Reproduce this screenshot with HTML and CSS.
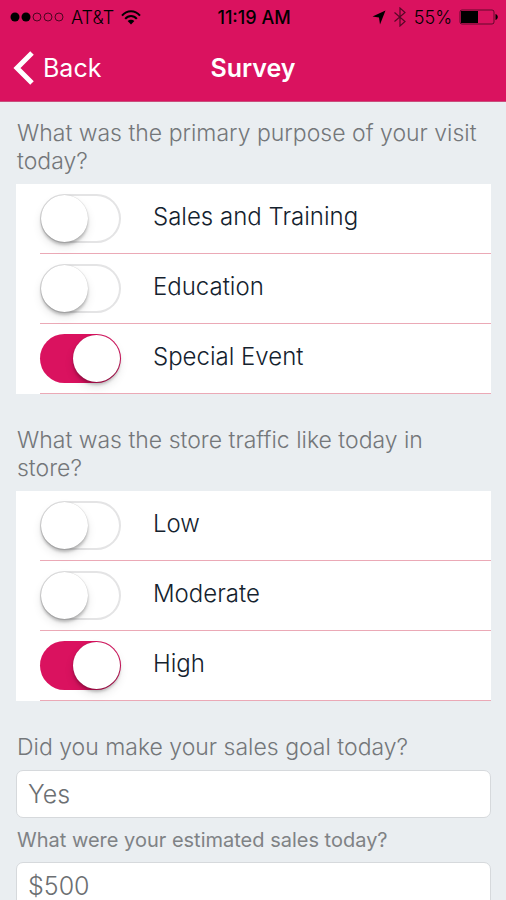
FILE: index.html
```html
<!DOCTYPE html>
<html lang="en">
<head>
<meta charset="utf-8">
<meta name="viewport" content="width=device-width, initial-scale=1">
<title>Survey</title>
<link rel="stylesheet" href="styles.css">
</head>
<body>
<header class="header">
  <div class="status">
    <div class="status-side">
      <svg class="signal" width="54" height="12" viewBox="0 0 54 12" aria-hidden="true">
        <circle cx="5" cy="6" r="4.5"/><circle cx="16" cy="6" r="4.5"/>
        <g fill="none" stroke="#000" stroke-opacity=".65" stroke-width="1"><circle cx="27" cy="6" r="4"/><circle cx="38" cy="6" r="4"/><circle cx="49" cy="6" r="4"/></g>
      </svg>
      <span class="carrier">AT&amp;T</span>
      <svg width="20" height="15" viewBox="0 0 20 15" aria-hidden="true">
        <g fill="none" stroke="#000" stroke-width="2"><path d="M1 5.6C6-.2 14-.2 19 5.6"/><path d="M4.200 8.900C7.500 5 12.500 5 15.800 8.900"/></g>
        <path d="M10 14.500 6.600 11C8.500 9.200 11.500 9.200 13.400 11Z"/>
      </svg>
    </div>
    <span class="time">11:19 AM</span>
    <div class="status-side status-right">
      <svg width="14" height="15" viewBox="0 0 14 15" aria-hidden="true"><path d="M13.500 .5 8 14.500 7 7.500 .5 6.500Z"/></svg>
      <svg class="bluetooth" width="14" height="20" viewBox="0 0 14 20" aria-hidden="true"><path d="M1.500 5.500 12 14.500 7 19V1L12 5.500 1.500 14.500" fill="none" stroke="#000" stroke-opacity=".6" stroke-width="1.200"/></svg>
      <span class="percent">55%</span>
      <svg width="39" height="16" viewBox="0 0 39 16" aria-hidden="true">
        <rect x="1" y="1" width="34" height="14" rx="2" fill="none" stroke="#000" stroke-opacity=".55"/>
        <path d="M2 2H19V14H2Z"/><path d="M36.500 5C39.500 6 39.500 10 36.500 11Z"/>
      </svg>
    </div>
  </div>
  <nav class="nav">
    <a class="back" href="#">
      <svg width="22" height="34" viewBox="0 0 22 34" aria-hidden="true"><path d="M19 2 4 17 19 32" fill="none" stroke="#fff" stroke-width="5"/></svg>
      <span>Back</span>
    </a>
    <h1 class="title">Survey</h1>
  </nav>
</header>
<main class="survey">
  <fieldset class="group">
    <legend class="question">What was the primary purpose of your visit today?</legend>
    <div class="list">
      <label class="row"><span class="cell"><input class="switch" type="checkbox" role="switch"><span class="name">Sales and Training</span></span></label>
      <label class="row"><span class="cell"><input class="switch" type="checkbox" role="switch"><span class="name">Education</span></span></label>
      <label class="row"><span class="cell"><input class="switch" type="checkbox" role="switch" checked><span class="name">Special Event</span></span></label>
    </div>
  </fieldset>
  <fieldset class="group">
    <legend class="question">What was the store traffic like today in store?</legend>
    <div class="list">
      <label class="row"><span class="cell"><input class="switch" type="checkbox" role="switch"><span class="name">Low</span></span></label>
      <label class="row"><span class="cell"><input class="switch" type="checkbox" role="switch"><span class="name">Moderate</span></span></label>
      <label class="row"><span class="cell"><input class="switch" type="checkbox" role="switch" checked><span class="name">High</span></span></label>
    </div>
  </fieldset>
  <div class="field">
    <label class="question" for="goal">Did you make your sales goal today?</label>
    <input class="text" id="goal" type="text" value="Yes">
  </div>
  <div class="field">
    <label class="question question-small" for="sales">What were your estimated sales today?</label>
    <input class="text" id="sales" type="text" value="$500">
  </div>
</main>
</body>
</html>
```
FILE: styles.css
```css
* { box-sizing: border-box; }

body {
  margin: 0;
  height: 100vh;
  display: flex;
  flex-direction: column;
  background: #eaeef1;
  font-family: Inter, "Liberation Sans", sans-serif;
  font-size: 23px;
  font-weight: 300;
}

.header {
  flex: none;
  background: #da125f;
  border-bottom: 1px solid #c94f7d;
}

.status {
  display: flex;
  align-items: center;
  height: 34px;
  padding: 0 8px 0 10px;
  font-size: 18px;
  color: #000;
}

.status-side {
  display: flex;
  flex: 1;
  align-items: center;
  gap: 7px;
}

.status-right { justify-content: flex-end; }
.time { font-weight: 500; }

.nav {
  display: grid;
  grid-template-columns: 1fr auto 1fr;
  align-items: center;
  height: 67px;
  padding: 0 13px;
  color: #fff;
}

.back {
  display: flex;
  align-items: center;
  gap: 8px;
  color: #fff;
  font-size: 25px;
  font-weight: 400;
  text-decoration: none;
}

.title {
  margin: 0;
  font-size: 25px;
  font-weight: 600;
}

.survey {
  flex: 1;
  min-height: 0;
  overflow-y: auto;
  scrollbar-width: none;
  padding: 17px 15px 16px 16px;
}

.group {
  margin: 0 0 32px;
  padding: 0;
  border: 0;
  min-width: 0;
}

.question {
  display: block;
  padding: 0 0 0 1px;
  margin-bottom: 9px;
  line-height: 28px;
  color: #74777a;
}

.question-small {
  font-size: 20px;
  font-weight: 400;
  color: #7f8285;
  margin-bottom: 8px;
}

.list { background: #fff; }

.row {
  display: block;
  padding-left: 24px;
  color: #14222e;
}

.cell {
  display: flex;
  align-items: center;
  gap: 32px;
  height: 70px;
  border-bottom: 1px solid #eba9b6;
}

.name {
  padding-bottom: 4px;
  font-size: 24px;
}

.switch {
  appearance: none;
  flex: none;
  width: 81px;
  height: 49px;
  margin: 0;
  padding: 1px;
  border-radius: 25px;
  background: #fff;
  box-shadow: inset 0 0 0 2px #e4e4e5;
}

.switch::before {
  content: "";
  display: block;
  width: 47px;
  height: 47px;
  border-radius: 50%;
  background: #fff;
  box-shadow: 0 0 1px #00000040, 0 3px 3px #00000038, 0 5px 10px #0000001a;
}

.switch:checked {
  background: #da125f;
  box-shadow: none;
}

.switch:checked::before { margin-left: 32px; }

.field { margin-bottom: 8px; }

.text {
  display: block;
  width: 100%;
  height: 48px;
  padding: 0 11px 1px;
  border: 1px solid #d6d9dc;
  border-radius: 7px;
  background: #fff;
  color: #6c6f72;
  font: inherit;
  font-size: 25px;
}
```
